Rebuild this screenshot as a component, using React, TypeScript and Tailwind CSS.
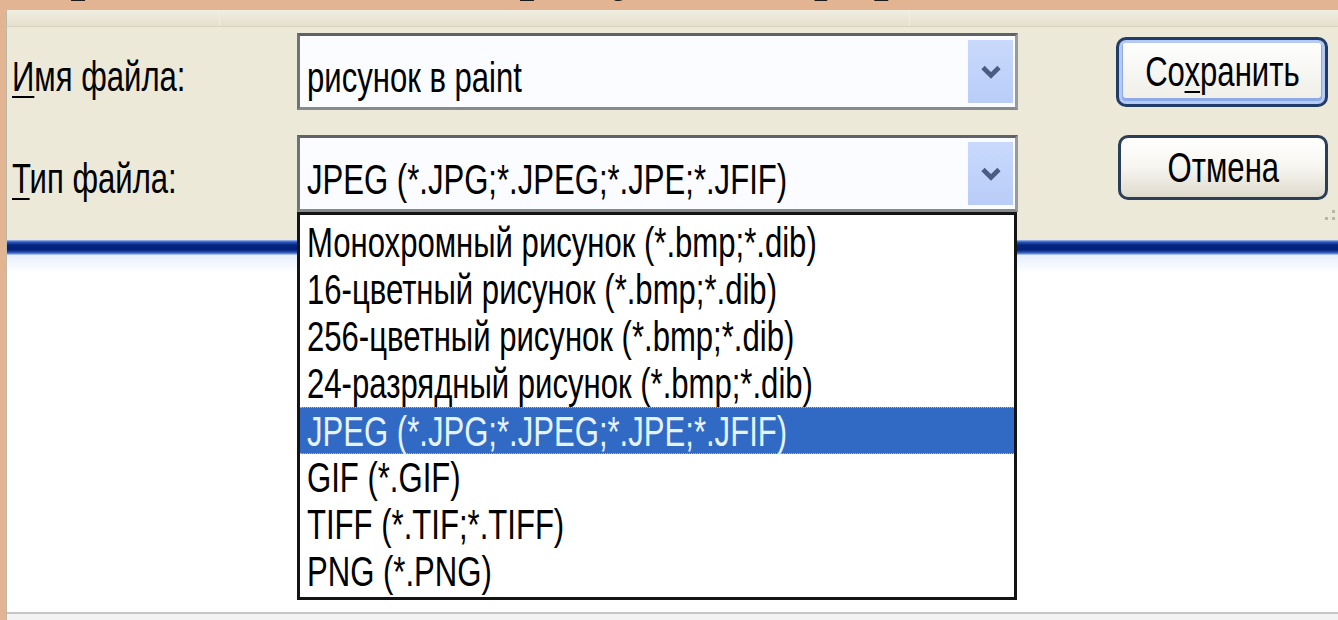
import React from "react";

const FILE_TYPES = [
  "Монохромный рисунок (*.bmp;*.dib)",
  "16-цветный рисунок (*.bmp;*.dib)",
  "256-цветный рисунок (*.bmp;*.dib)",
  "24-разрядный рисунок (*.bmp;*.dib)",
  "JPEG (*.JPG;*.JPEG;*.JPE;*.JFIF)",
  "GIF (*.GIF)",
  "TIFF (*.TIF;*.TIFF)",
  "PNG (*.PNG)",
];
const SELECTED = 4;

// Tahoma-like dialog text, squeezed horizontally like the classic bitmap font
function Narrow({ children, center = false }: { children: React.ReactNode; center?: boolean }) {
  return (
    <span
      className={
        center
          ? "inline-block whitespace-nowrap origin-center scale-x-[0.74]"
          : "inline-block whitespace-nowrap origin-left scale-x-[0.74]"
      }
    >
      {children}
    </span>
  );
}

function Chevron() {
  return (
    <svg width="22" height="16" viewBox="0 0 22 16">
      <path d="M3 3.5 L11 11.5 L19 3.5" stroke="#4a5c80" strokeWidth="4.6" fill="none" strokeLinejoin="miter" />
    </svg>
  );
}

function Combo({ value }: { value: string }) {
  return (
    <div className="h-[77px] flex border-[3px] border-t-[#5f6368] border-l-[#6f7378] border-r-[#979ba0] border-b-[#858a8f] bg-[#fbfcff]">
      <div className="flex-1 pl-[7px] pt-[21px] text-[42px] leading-[42px]">
        <Narrow>{value}</Narrow>
      </div>
      <div className="w-[45px] my-[4px] mr-[2px] flex items-center justify-center bg-linear-to-b from-[#c9d9fc] to-[#b9cdf8]">
        <Chevron />
      </div>
    </div>
  );
}

function Label({ accel, rest }: { accel: string; rest: string }) {
  return (
    <div className="pl-[5px] pt-[23px] text-[42px] leading-[42px]">
      <Narrow>
        <span className="underline decoration-2 underline-offset-[5px]">{accel}</span>
        {rest}
      </Narrow>
    </div>
  );
}

export default function App() {
  return (
    <div className="w-[1338px] h-[620px] overflow-hidden flex flex-col bg-[#e3b492] text-black font-['Liberation_Sans',Arial,sans-serif]">
      {/* slide title, only its lowest strokes peek out above the dialog */}
      <div className="h-[10px] shrink-0 overflow-hidden">
        <p className="-mt-[66px] -ml-[35px] whitespace-nowrap text-[64px] leading-[64px] text-[#1c1c1c] font-['Liberation_Serif','Times_New_Roman',serif]">
          Сохранение нашего рисунка в формате JPG
        </p>
      </div>

      {/* save dialog */}
      <div className="relative flex-1 ml-[6px] flex flex-col bg-[#ece9d8] border-l border-[#bdb9a9]">
        <div className="h-[17px] shrink-0 flex bg-linear-to-b from-[#f0eee2] to-[#e4e0cc] border-b border-[#d6d2c2]">
          <div className="w-[213px] border-r border-[#efece0]" />
          <div className="w-[690px] border-r border-[#efece0]" />
        </div>

        <div className="h-[213px] shrink-0 grid grid-cols-[290px_721px_1fr] grid-rows-[77px_77px] gap-y-[25px] pt-[6px]">
          <Label accel="И" rest="мя файла:" />
          <Combo value="рисунок в paint" />
          <div className="pl-[98px] pt-[4px]">
            <button className="w-[212px] h-[70px] rounded-[10px] border-[3px] border-[#1f3d68] bg-linear-to-b from-[#ffffff] to-[#eeede6] shadow-[inset_0_0_0_3px_#b4c9f3,inset_0_-2px_0_4px_#8eaae6] flex items-center justify-center text-[42px] leading-[42px]">
              <Narrow center>
                Со<span className="underline decoration-2 underline-offset-[5px]">х</span>ранить
              </Narrow>
            </button>
          </div>

          <Label accel="Т" rest="ип файла:" />
          <Combo value="JPEG (*.JPG;*.JPEG;*.JPE;*.JFIF)" />
          <div className="pl-[100px] flex flex-col">
            <button className="w-[210px] h-[65px] shrink-0 rounded-[10px] border-[3px] border-[#2b3e58] bg-linear-to-b from-[#ffffff] via-[#f6f5f0] to-[#dedacd] flex items-center justify-center text-[42px] leading-[42px]">
              <Narrow center>Отмена</Narrow>
            </button>
            <div className="self-end mr-[3px] mt-[10px] grid grid-cols-2 gap-[4px]">
              <span />
              <span className="w-[3px] h-[3px] bg-[#b9b6a8]" />
              <span className="w-[3px] h-[3px] bg-[#b9b6a8]" />
              <span className="w-[3px] h-[3px] bg-[#b9b6a8]" />
            </div>
          </div>
        </div>

        {/* selected bar of the folder view below */}
        <div className="h-[15px] shrink-0 bg-[linear-gradient(to_bottom,#a9c3f0_0px,#2c58c0_2px,#05257f_5px,#03207a_10px,#3a66c8_13px,#c9daf7_15px)]" />
        <div className="flex-1 flex flex-col bg-white">
          <div className="h-[18px] bg-linear-to-b from-[#e8effc] to-white" />
        </div>
        <div className="h-[8px] shrink-0 border-t-2 border-[#c6c6c6] bg-[#f3f3f3]" />

        {/* open file type list */}
        <div className="absolute left-[290px] top-[202px] w-[720px] h-[388px] border-[3px] border-[#141414] bg-white pt-[4px] text-[42px]">
          {FILE_TYPES.map((t, i) =>
            i === SELECTED ? (
              <div
                key={t}
                className="h-[47px] leading-[47px] pl-[7px] bg-[#316ac5] text-[#e4f3ff] border-y border-dotted border-[#9cb6e8]"
              >
                <Narrow>{t}</Narrow>
              </div>
            ) : (
              <div key={t} className="h-[47px] leading-[47px] pl-[7px]">
                <Narrow>{t}</Narrow>
              </div>
            )
          )}
        </div>
      </div>
    </div>
  );
}
